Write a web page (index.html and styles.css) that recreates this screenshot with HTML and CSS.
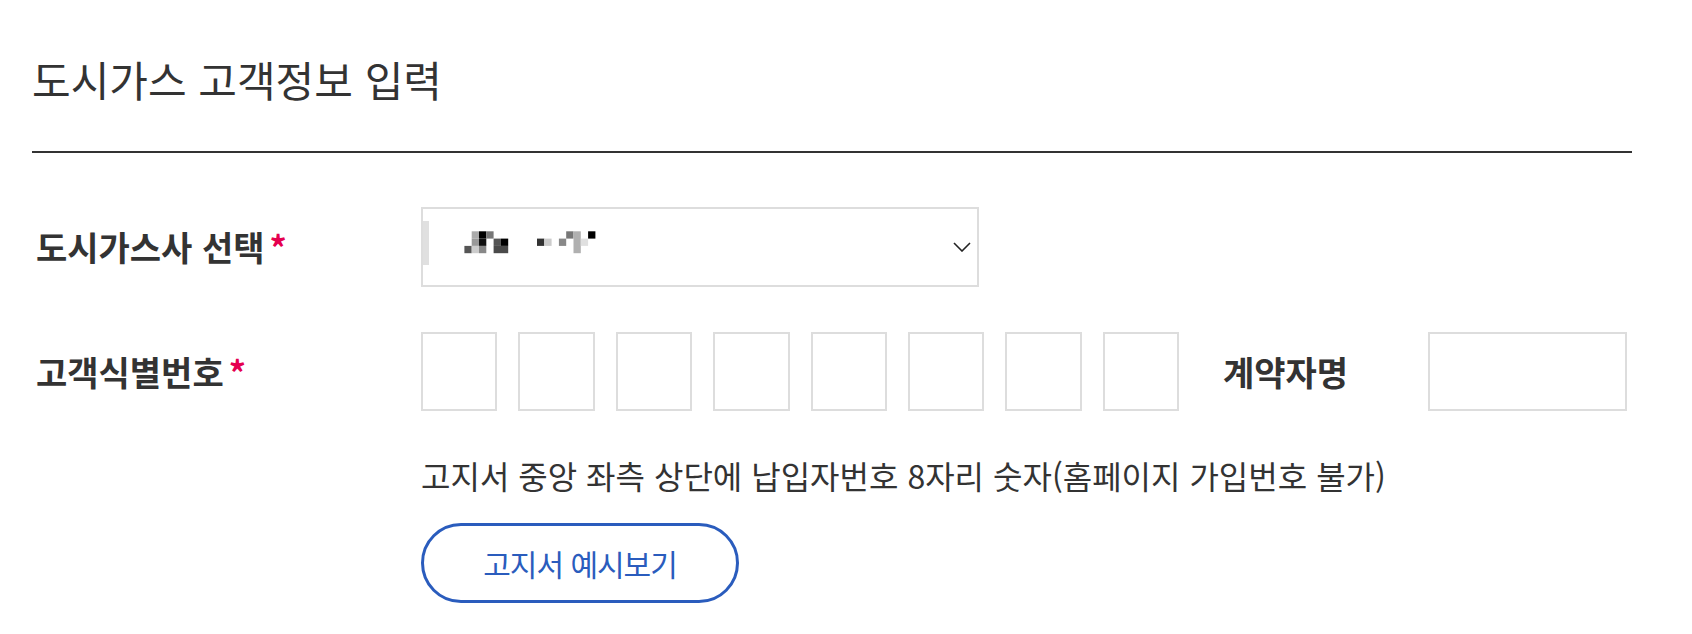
FILE: index.html
```html
<!DOCTYPE html>
<html lang="ko">
<head>
  <meta charset="utf-8">
  <title>도시가스 고객정보 입력</title>
  <meta name="viewport" content="width=device-width, initial-scale=1.0">
  <link rel="stylesheet" href="styles.css">
</head>
<body>

  <main class="customer-form">
    <h2 class="form-title">도시가스 고객정보 입력</h2>

    <div class="form-row row-company">
      <label class="form-label">도시가스사 선택<span class="req">*</span></label>
      <div class="form-field">
        <div class="select-box">
          <svg class="masked" width="190" height="48" viewBox="0 0 190 48" aria-hidden="true">
            <rect x="0" y="0" width="6" height="44" fill="#e0e0e0"/>
            <rect x="48.7" y="10.3" width="7.3" height="7.3" fill="#aaa"/>
            <rect x="56" y="10.3" width="7.3" height="7.3" fill="#000"/>
            <rect x="63.3" y="10.3" width="7.3" height="7.3" fill="#777"/>
            <rect x="48.7" y="17.6" width="7.3" height="7.3" fill="#999"/>
            <rect x="56" y="17.6" width="7.3" height="7.3" fill="#111"/>
            <rect x="70.6" y="17.6" width="7.3" height="7.3" fill="#555"/>
            <rect x="77.9" y="17.6" width="7.3" height="7.3" fill="#000"/>
            <rect x="41.4" y="24.9" width="7.3" height="7.3" fill="#555"/>
            <rect x="48.7" y="24.9" width="7.3" height="7.3" fill="#ccc"/>
            <rect x="56" y="24.9" width="7.3" height="7.3" fill="#888"/>
            <rect x="70.6" y="24.9" width="14.6" height="7.3" fill="#4a4a4a"/>
            <rect x="114" y="17.6" width="7.3" height="7.3" fill="#333"/>
            <rect x="121.3" y="17.6" width="7.3" height="7.3" fill="#ccc"/>
            <rect x="135.9" y="17.6" width="7.3" height="7.3" fill="#888"/>
            <rect x="143.2" y="10.3" width="7.3" height="7.3" fill="#777"/>
            <rect x="150.5" y="10.3" width="7.3" height="21.9" fill="#b0b0b0"/>
            <rect x="157.8" y="17.6" width="7.3" height="7.3" fill="#e0e0e0"/>
            <rect x="165.1" y="10.3" width="7.3" height="7.3" fill="#000"/>
          </svg>
          <svg class="chevron" width="18" height="10" viewBox="0 0 18 10" aria-hidden="true">
            <polyline points="1,1 9,9 17,1" fill="none" stroke="#222" stroke-width="1.6"/>
          </svg>
        </div>
      </div>
    </div>

    <div class="form-row row-customer">
      <label class="form-label">고객식별번호<span class="req">*</span></label>
      <div class="form-field">
        <div class="id-inputs">
          <div class="digit-boxes">
            <input type="text" maxlength="1">
            <input type="text" maxlength="1">
            <input type="text" maxlength="1">
            <input type="text" maxlength="1">
            <input type="text" maxlength="1">
            <input type="text" maxlength="1">
            <input type="text" maxlength="1">
            <input type="text" maxlength="1">
          </div>
          <span class="sub-label">계약자명</span>
          <input class="name-input" type="text">
        </div>
        <p class="hint">고지서 중앙 좌측 상단에 납입자번호 8자리 숫자(홈페이지 가입번호 불가)</p>
        <button class="btn-outline" type="button">고지서 예시보기</button>
      </div>
    </div>
  </main>

</body>
</html>
```

FILE: styles.css
```css
html {
  box-sizing: border-box;
}

*, *:before, *:after {
  box-sizing: inherit;
}

body {
  margin: 0;
  background: #fff;
  color: #333;
  font-family: "Noto Sans CJK KR", "Noto Sans", sans-serif;
}

.customer-form {
  width: 1664px;
  padding: 0 32px;
}

.form-title {
  margin: 0;
  padding: 58px 0 51px;
  border-bottom: 2px solid #333;
  font-size: 42px;
  font-weight: 400;
  line-height: 42px;
}

.form-row {
  display: flex;
  align-items: flex-start;
}

.row-company {
  margin-top: 54px;
}

.row-customer {
  margin-top: 45px;
}

.form-label {
  flex: none;
  width: 389px;
  padding-left: 4px;
  font-size: 34px;
  font-weight: 700;
  line-height: 80px;
}

.req {
  margin-left: 5px;
  color: #e5004f;
}

.select-box {
  display: flex;
  align-items: center;
  justify-content: space-between;
  width: 558px;
  height: 80px;
  padding-right: 6px;
  border: 2px solid #ddd;
}

.masked {
  display: block;
  margin-top: -4px;
}

.chevron {
  display: block;
}

.id-inputs {
  display: flex;
  align-items: center;
}

.digit-boxes {
  display: flex;
  gap: 21px;
  width: 758px;
}

.digit-boxes input,
.name-input {
  height: 79px;
  margin: 0;
  padding: 0;
  border: 2px solid #ddd;
  border-radius: 0;
  background: #fff;
  font-family: inherit;
  font-size: 32px;
  text-align: center;
}

.digit-boxes input {
  flex: 1;
  min-width: 0;
}

.sub-label {
  margin: 0 80px 0 44px;
  font-size: 34px;
  font-weight: 700;
  line-height: 79px;
}

.name-input {
  width: 199px;
}

.hint {
  margin: 40px 0 0;
  font-size: 32px;
  line-height: 48px;
}

.btn-outline {
  display: block;
  width: 318px;
  height: 80px;
  margin-top: 24px;
  border: 3px solid #2a5cbd;
  border-radius: 40px;
  background: #fff;
  color: #2a5cbd;
  font-family: inherit;
  font-size: 30px;
  font-weight: 400;
  letter-spacing: -1px;
}
```
